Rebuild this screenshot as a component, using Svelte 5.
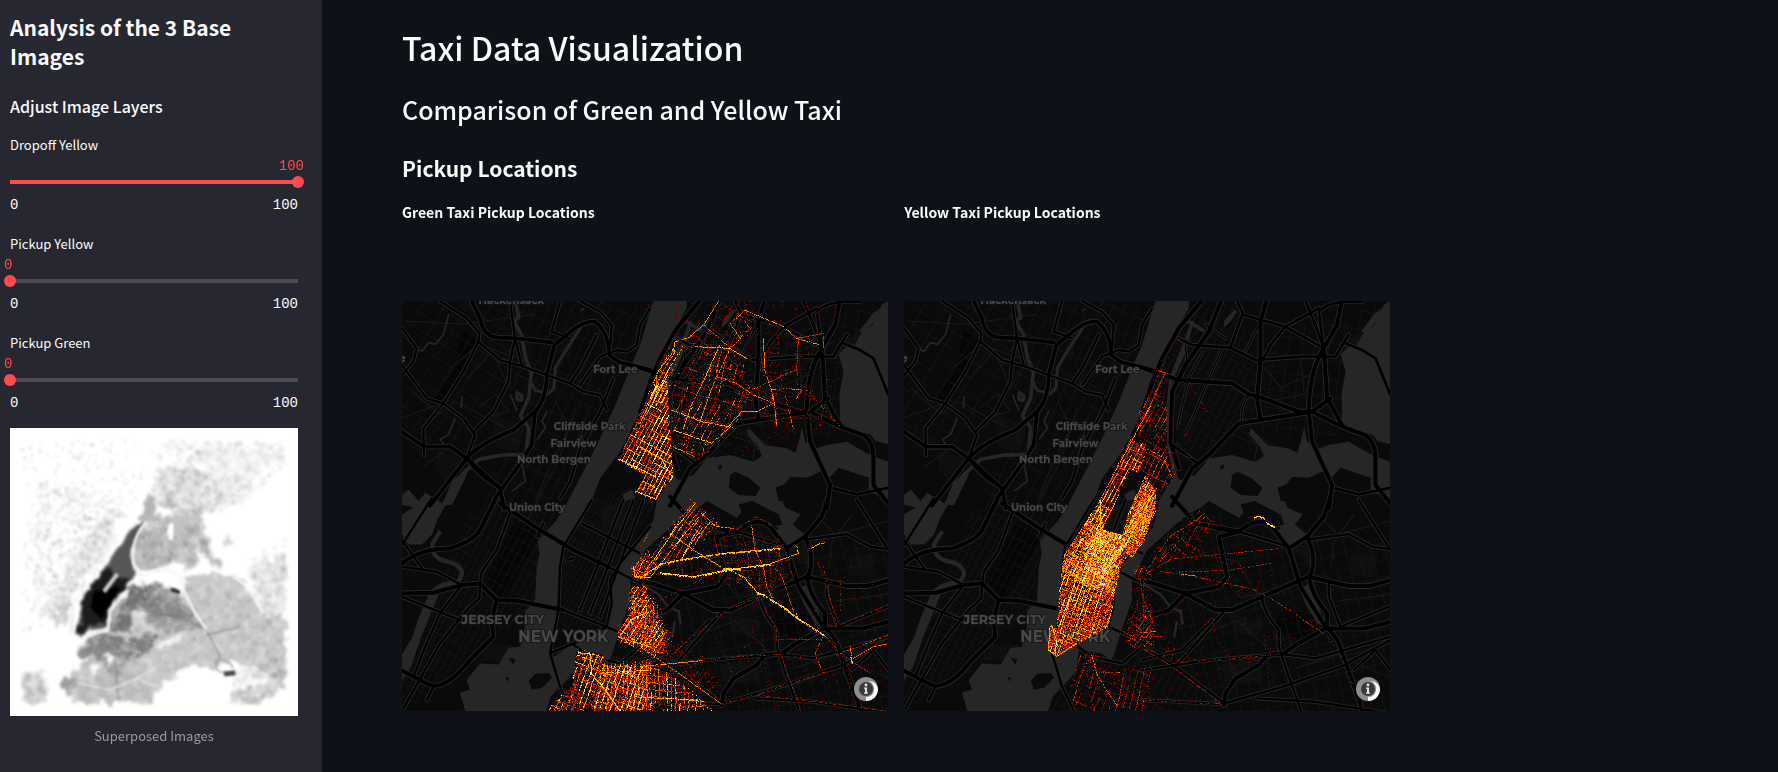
<script>
  let layers = $state([
    { id: 'dropoff-yellow', name: 'Dropoff Yellow', value: 100 },
    { id: 'pickup-yellow', name: 'Pickup Yellow', value: 0 },
    { id: 'pickup-green', name: 'Pickup Green', value: 0 }
  ]);

  // ---- seeded noise -------------------------------------------------------
  function seeded(seed) {
    let s = seed;
    return () => {
      s = (s + 0x6d2b79f5) | 0;
      let t = Math.imul(s ^ (s >>> 15), 1 | s);
      t = (t + Math.imul(t ^ (t >>> 7), 61 | t)) ^ t;
      return ((t ^ (t >>> 14)) >>> 0) / 4294967296;
    };
  }
  const hash = (a, b) => {
    const v = Math.sin(a * 127.1 + b * 311.7) * 43758.5453;
    return v - Math.floor(v);
  };
  function inside(x, y, p) {
    let r = false;
    for (let i = 0, j = p.length - 1; i < p.length; j = i++) {
      if (p[i][1] > y !== p[j][1] > y && x < ((p[j][0] - p[i][0]) * (y - p[i][1])) / (p[j][1] - p[i][1]) + p[i][0]) r = !r;
    }
    return r;
  }

  // ---- heat raster --------------------------------------------------------
  const W = 486, H = 410;
  const RAMP = ['#3c0500', '#7a0d00', '#b81a00', '#e83c00', '#ff7a00', '#ffa800', '#ffd21c', '#fff09a'];
  // map sheets: nw, ne, sw, se (origin of each sheet in thirds of a pixel)
  const SHEETS = { a: [-6, -18], b: [714, -18], c: [-6, 597], d: [714, 597] };
  const parse = (sheet, s) => {
    const o = SHEETS[sheet];
    return s.split(' ').map((q) => {
      const [x, y] = q.split(',').map(Number);
      return [(x + o[0]) / 3, (y + o[1]) / 3];
    });
  };

  function raster(seed, areas, lines, holes) {
    const rnd = seeded(seed);
    const cells = new Float32Array(W * H);
    const put = (x, y, v) => {
      x = Math.floor(x);
      y = Math.floor(y);
      if (x >= 0 && y >= 0 && x < W && y < H && v > cells[y * W + x]) cells[y * W + x] = v;
    };
    for (const [sheet, pts, deg, su, sv, power, fill, loose = 0] of areas) {
      const p = parse(sheet, pts);
      const a = (deg * Math.PI) / 180;
      const c = Math.cos(a), s = Math.sin(a);
      const xs = p.map((q) => q[0]), ys = p.map((q) => q[1]);
      const pad = loose * 4;
      for (let y = Math.floor(Math.min(...ys)) - pad; y <= Math.max(...ys) + pad; y++)
        for (let x = Math.floor(Math.min(...xs)) - pad; x <= Math.max(...xs) + pad; x++) {
          const jitter = 1 + loose * 7;
          if (!inside(x + (rnd() - 0.5) * jitter, y + (rnd() - 0.5) * jitter, p)) continue;
          const u0 = x * c + y * s + 900, v0 = -x * s + y * c + 900;
          const u = u0 + loose * (2.2 * Math.sin(v0 / 13) + 1.5 * Math.sin(v0 / 31 + u0 / 19));
          const v = v0 + loose * (2.4 * Math.sin(u0 / 15) + 1.5 * Math.sin(u0 / 37 + v0 / 23));
          const iu = Math.floor(u / su), iv = Math.floor(v / sv);
          let e = 0;
          const gu = hash(iu, Math.floor(v / 18 + iu * 0.37));
          const gv = hash(iv + 57, Math.floor(u / 16 + iv * 0.41));
          const cut = loose * 0.42;
          if (u - iu * su < 1.1 && gu > cut) e = power * (0.3 + 0.85 * gu);
          if (v - iv * sv < 1.05 && gv > cut) e = Math.max(e, power * (0.2 + 0.7 * gv));
          if (e) e = rnd() < loose * 0.38 ? 0 : e * (0.35 + rnd() * 0.8);
          if (!e) e = rnd() < fill ? Math.max(0.2, fill) * (0.3 + rnd()) : 0;
          if (e > 0.1) put(x, y, Math.min(1, e));
        }
    }
    for (const [sheet, power, density, pts] of lines) {
      const p = parse(sheet, pts);
      for (let i = 1; i < p.length; i++) {
        const dx = p[i][0] - p[i - 1][0], dy = p[i][1] - p[i - 1][1];
        const n = Math.max(1, Math.ceil(Math.max(Math.abs(dx), Math.abs(dy))));
        for (let k = 0; k <= n; k++) {
          if (rnd() > density) continue;
          const x = p[i - 1][0] + (dx * k) / n, y = p[i - 1][1] + (dy * k) / n;
          put(x, y, power * (0.5 + rnd() * 0.5));
          if (power > 0.95 && rnd() < 0.5) put(x, y + 1, power * 0.7);
          if (power > 0.5 && rnd() < 0.12) put(x + (rnd() - 0.5) * 5, y + (rnd() - 0.5) * 5, 0.35);
        }
      }
    }
    for (const [sheet, pts] of holes) {
      const p = parse(sheet, pts);
      for (let y = 0; y < H; y++) for (let x = 0; x < W; x++) if (inside(x, y, p)) cells[y * W + x] = 0;
    }
    const d = RAMP.map(() => '');
    for (let y = 0; y < H; y++)
      for (let x = 0; x < W; x++) {
        const e = cells[y * W + x];
        if (e > 0.06) d[Math.min(7, Math.floor(e * 8))] += `M${x} ${y}h1v1h-1z`;
      }
    return d;
  }

  const green = raster(
    11,
    [
      // upper Manhattan
      ['a', '654,492 745,300 800,230 805,330 812,440 818,545 765,615 705,588 735,540', 28, 4, 7, 1.16, 0.3],
      ['a', '745,300 790,190 825,140 850,150 810,235 800,330', 28, 4, 8, 0.85, 0.15, 0.4],
      // Bronx
      ['b', '105,250 180,165 235,150 310,180 315,250 350,285 270,395 180,490 105,450 95,330', 21, 6, 11, 0.58, 0.1, 1],
      ['b', '100,150 190,90 225,18 330,18 335,110 270,170 120,160', 30, 9, 14, 0.28, 0.05, 1],
      ['b', '360,140 480,130 485,280 560,330 570,390 430,430 350,350', 4, 16, 21, 0.28, 0.03, 1],
      // Astoria
      ['d', '155,0 235,70 180,120 130,178 60,195 0,235 15,200 90,90', 35, 5, 9, 0.76, 0.2, 0.6],
      // Jackson Heights
      ['d', '20,220 170,160 250,100 420,110 470,200 400,290 350,260 60,220', -9, 10, 8, 0.3, 0.06, 1],
      // Greenpoint and Williamsburg
      ['c', '700,190 750,150 750,235 695,235', 24, 4, 6, 0.85, 0.35, 0.4],
      ['c', '690,262 735,255 770,340 800,400 790,440 775,460 655,425 655,395 690,340', 34, 4, 6, 0.95, 0.36, 0.3],
      ['d', '-20,280 50,310 75,390 95,400 80,460 50,475 -40,430', 2, 4, 6, 0.74, 0.26, 0.8],
      // Brooklyn
      ['c', '535,452 605,462 625,500 750,490 750,632 440,632 515,560', 22, 5, 7, 1.0, 0.32, 0.3],
      ['d', '-110,490 30,480 110,540 200,612 210,632 -150,632', 3, 4, 7, 0.8, 0.26, 0.5],
      ['d', '60,470 130,420 190,480 240,560 240,610 120,540', 40, 7, 11, 0.3, 0.1, 1],
      ['d', '350,60 745,200 745,632 240,632', -14, 40, 40, 0.14, 0.006, 1],
      ['b', '20,18 600,18 600,400 300,500 100,500', -14, 40, 40, 0.14, 0.012, 1]
    ],
    [
      ['b', 0.75, 0.9, '235,18 190,90 150,125 105,140 100,170 50,235 50,280 0,385'],
      ['b', 0.85, 0.9, '165,155 270,160 320,190'],
      ['b', 0.7, 0.8, '190,90 225,120 270,160 300,130 270,85 315,45 430,95 470,130 540,150'],
      ['b', 0.6, 0.7, '300,60 330,100 300,130'],
      ['b', 0.6, 0.75, '230,245 290,265 340,300 400,325 395,285 440,280 485,285 470,310'],
      ['b', 0.7, 0.75, '370,130 375,230 400,300 410,390'],
      ['b', 0.5, 0.7, '350,280 420,245 470,225 475,130'],
      ['b', 0.8, 0.85, '95,345 185,380 265,395 305,350 350,350 400,325'],
      ['b', 0.9, 0.9, '100,405 215,445 270,395'],
      ['b', 0.7, 0.8, '100,455 175,490'],
      ['b', 0.6, 0.7, '435,300 460,400'],
      ['b', 0.5, 0.6, '500,285 600,395'],
      ['b', 0.5, 0.7, '470,130 550,115 550,160'],
      ['b', 0.85, 0.85, '240,150 190,260 150,340 130,400'],
      ['b', 0.75, 0.8, '270,160 215,280 180,380 130,450'],
      ['b', 1, 1, '0,455 65,490 95,545'],
      ['b', 1, 1, '42,268 56,284 48,290'],
      ['a', 1, 1, '654,492 735,530 765,545'],
      ['a', 1, 1, '705,588 765,612'],
      ['d', 0.96, 0.95, '0,232 60,192 130,178 250,160 420,145'],
      ['d', 1.1, 1, '60,218 160,230 270,208 390,192'],
      ['d', 0.8, 0.9, '390,192 475,160 470,138'],
      ['d', 0.96, 0.9, '270,208 310,230 350,275 365,282 400,302 470,350'],
      ['d', 1, 1, '352,280 372,284'],
      ['d', 1, 1, '250,206 300,208'],
      ['d', 1, 0.95, '395,300 430,320 470,352 510,378 555,408'],
      ['d', 0.7, 0.8, '470,340 474,362'],
      ['d', 0.65, 0.8, '335,75 345,150 370,200 380,260 400,300'],
      ['d', 0.5, 0.8, '395,190 425,230 460,330'],
      ['d', 0.85, 0.9, '515,145 535,132 555,128'],
      ['d', 0.9, 0.9, '15,215 90,110 165,10'],
      ['d', 0.85, 0.85, '35,225 110,130 185,40'],
      ['d', 0.85, 0.85, '125,178 160,120 190,80'],
      ['d', 0.85, 0.9, '90,100 160,150 240,200'],
      ['d', 0.7, 0.8, '185,40 230,80 280,85'],
      ['d', 0.4, 0.6, '280,95 350,50 390,75'],
      ['d', 0.7, 0.8, '0,440 60,480 130,530 240,610'],
      ['d', 0.75, 0.9, '0,500 80,492 185,482'],
      ['d', 0.35, 0.5, '185,482 300,470 425,462'],
      ['d', 0.35, 0.5, '425,462 440,520 475,600 480,630'],
      ['d', 0.35, 0.5, '360,290 410,390 410,420 540,418'],
      ['d', 0.4, 0.6, '555,408 600,460 690,520'],
      ['d', 0.55, 0.6, '550,410 525,460 545,510'],
      ['d', 0.5, 0.6, '590,465 680,430 745,405'],
      ['d', 0.65, 0.75, '635,490 632,440'],
      ['d', 0.65, 0.75, '640,475 668,460 700,440 740,432'],
      ['d', 1, 1, '632,472 638,487'],
      ['d', 0.3, 0.4, '590,380 745,315'],
      ['d', 0.3, 0.4, '600,250 600,340'],
      ['d', 0.35, 0.5, '245,612 360,580 560,515'],
      ['d', 0.35, 0.45, '350,585 520,605 740,632'],
      ['d', 0.35, 0.5, '550,200 590,380'],
      ['d', 0.35, 0.4, '60,300 220,220'],
      ['d', 0.35, 0.5, '130,430 260,330 360,290'],
      ['d', 0.9, 0.9, '0,592 130,598 190,605'],
      ['c', 1, 1, '535,458 570,462 575,520 620,575 660,632'],
      ['c', 0.9, 0.9, '600,520 750,510'],
      ['c', 0.95, 1, '655,410 700,425 750,440'],
      ['c', 1, 1, '660,405 690,360 745,335'],
      ['c', 0.9, 1, '700,200 705,230 750,232'],
      ['c', 0.6, 0.7, '720,140 750,95']
    ],
    []
  );

  SHEETS.a = [-12, -18];
  SHEETS.b = [708, -18];
  SHEETS.c = [-12, 597];
  SHEETS.d = [708, 597];
  const yellow = raster(
    29,
    [
      // Harlem
      ['a', '690,420 745,310 775,260 800,350 805,460 825,545 765,600 700,520', 28, 5, 9, 0.46, 0.06, 0.4],
      ['b', '60,200 80,190 70,290 0,420 -30,400 20,300', 28, 5, 12, 0.32, 0.03, 0.7],
      // west side
      ['a', '590,632 690,430 740,450 650,680 600,720 540,700', 28, 4, 7, 0.88, 0.28],
      // east side
      ['a', '660,700 735,540 765,585 765,632 730,740 690,790', 28, 3, 6, 0.96, 0.62],
      // midtown
      ['c', '600,0 610,85 668,105 735,-40 768,30 715,120 660,200 640,290 560,260 485,210 490,165 545,80', 28, 4, 6, 0.98, 0.6],
      ['c', '555,120 600,85 665,105 680,130 640,195 600,240 555,200', 28, 3, 5, 1.0, 0.8],
      // downtown
      ['c', '487,180 640,200 640,300 625,380 525,435 470,470 443,450 450,375 470,385 475,300', 20, 4, 6, 0.95, 0.5],
      // Queens and Brooklyn
      ['d', '10,215 90,90 185,30 235,70 150,170 50,190', 35, 8, 11, 0.32, 0.03, 0.8],
      ['c', '700,200 750,195 750,235 705,235', 24, 4, 6, 0.4, 0.1, 0.6],
      ['c', '670,400 700,340 760,330 760,440 700,440', 34, 4, 6, 0.44, 0.12, 0.6],
      ['c', '700,240 750,240 750,330 700,330', 5, 6, 8, 0.28, 0.06, 0.8],
      ['c', '535,470 580,460 620,510 750,500 750,632 520,632 520,540', 20, 6, 9, 0.36, 0.05, 0.8],
      ['d', '-10,300 40,320 60,400 120,470 80,490 -10,440', 6, 7, 10, 0.24, 0.03, 1],
      ['d', '20,100 300,100 560,420 250,620 0,620', 6, 40, 50, 0.12, 0.008, 1]
    ],
    [
      ['c', 1, 1, '600,0 600,85 665,105'],
      ['c', 0.9, 0.9, '600,85 560,160 520,260 480,400'],
      ['c', 0.9, 1, '450,380 445,450 470,470 520,435'],
      ['c', 1, 0.9, '455,375 470,420 465,460'],
      ['a', 0.8, 0.85, '595,625 750,335'],
      ['b', 0.5, 0.7, '50,225 75,235 50,285 25,350 0,395'],
      ['b', 0.75, 0.9, '0,590 40,608'],
      ['b', 0.7, 0.8, '0,450 70,488 95,545'],
      ['d', 1, 1, '342,53 355,48 372,54'],
      ['d', 1, 1, '380,68 392,75 402,80'],
      ['d', 0.9, 1, '382,72 398,80'],
      ['d', 0.7, 0.9, '120,222 165,228'],
      ['d', 0.4, 0.7, '60,215 120,222'],
      ['d', 0.4, 0.6, '165,230 340,268 400,300 480,352 550,400'],
      ['d', 0.4, 0.55, '0,232 90,178 250,162 425,145'],
      ['d', 0.38, 0.5, '110,215 260,212 390,190'],
      ['d', 0.5, 0.7, '20,210 90,110 170,60 195,38'],
      ['d', 0.45, 0.6, '95,100 180,155'],
      ['d', 0.4, 0.6, '60,185 150,90'],
      ['d', 0.7, 0.7, '0,398 45,395'],
      ['d', 0.5, 0.6, '0,412 65,408'],
      ['d', 0.4, 0.6, '0,235 10,300 40,370'],
      ['d', 0.3, 0.5, '0,440 90,495 240,612'],
      ['d', 0.3, 0.4, '0,600 240,612'],
      ['d', 0.3, 0.4, '100,490 425,462'],
      ['d', 0.25, 0.3, '555,400 600,460 670,630'],
      ['b', 0.28, 0.25, '110,140 190,85 215,70'],
      ['b', 0.28, 0.2, '110,450 200,350 140,250'],
      ['b', 0.3, 0.35, '90,470 160,490 110,440'],
      ['c', 0.6, 0.8, '575,465 590,520 620,570 650,615'],
      ['c', 0.55, 0.6, '570,470 545,520 520,600'],
      ['c', 0.55, 0.7, '605,518 660,518']
    ],
    [
      ['c', '608,88 690,-95 716,-80 665,103']
    ]
  );

  // ---- superposed image speckle ------------------------------------------
  const dust = (() => {
    const rnd = seeded(5);
    const zones = [
      [[[66, 60], [470, 60], [400, 260], [240, 480], [170, 620], [66, 660]], 460, 0.07, 4],
      [[[110, 180], [400, 240], [330, 370], [160, 600], [100, 560]], 760, 0.07, 5],
      [[[230, 380], [340, 270], [340, 390], [190, 600], [110, 600]], 340, 0.06, 6],
      [[[490, 60], [850, 70], [850, 140], [700, 280], [560, 260], [450, 210]], 620, 0.05, 8],
      [[[560, 140], [660, 170], [670, 280], [520, 270], [450, 230], [470, 160]], 260, 0.05, 8],
      [[[740, 420], [858, 350], [858, 560], [780, 560]], 150, 0.06, 8],
      [[[66, 760], [140, 750], [140, 850], [66, 850]], 90, 0.06, 9],
      [[[700, 760], [858, 700], [858, 800], [780, 850], [690, 850]], 160, 0.07, 8],
      [[[400, 340], [600, 300], [660, 430], [560, 430], [420, 440]], 220, 0.06, 8],
      [[[340, 500], [560, 490], [850, 540], [850, 700], [460, 760], [230, 840], [250, 690]], 700, 0.05, 8]
    ];
    const out = [];
    for (const [poly, n, op, size] of zones) {
      const xs = poly.map((q) => q[0]), ys = poly.map((q) => q[1]);
      const x0 = Math.min(...xs), x1 = Math.max(...xs), y0 = Math.min(...ys), y1 = Math.max(...ys);
      for (let i = 0; i < n; i++) {
        const x = x0 + rnd() * (x1 - x0), y = y0 + rnd() * (y1 - y0);
        if (inside(x, y, poly)) out.push({ x: Math.round(x), y: Math.round(y), r: 3 + Math.round(rnd() * size), o: (op * (0.4 + rnd() * 0.8)).toFixed(2) });
      }
    }
    return out;
  })();

  // ---- base map -----------------------------------------------------------
  const roads = [
    ['translate(-6 -18)', 11, [
      'M215 18L240 70Q250 128 300 128L345 130L455 142',
      'M90 632L200 490Q240 445 340 405L405 350Q440 310 440 240L463 150L500 120Q550 75 585 80Q625 110 628 180L655 200L750 225',
      'M6 410L72 455L150 455L200 490L300 580L312 640',
      'M405 350L395 450L350 520L285 610'
    ]],
    ['translate(-6 -18)', 7, [
      'M120 18L200 70L238 115L235 140L300 195L370 215L440 240L510 265L550 290L600 300L620 345',
      'M235 140L190 230L130 325L70 400L72 480',
      'M6 210L80 310L130 325L190 370L225 420L200 490',
      'M330 18L345 130L330 200L325 260L280 350L220 410',
      'M540 18L600 50L635 90L628 180',
      'M750 40L720 90L710 150L680 170L650 165L600 185L540 270',
      'M480 18L455 110L510 130M345 130L365 210',
      'M200 490Q230 540 300 580M6 100L50 160L40 200L6 240',
      'M640 250L600 350L540 460L510 560L480 610M510 265L540 220L590 120'
    ]],
    ['translate(714 -18)', 12, [
      'M185 10L110 100L60 190L35 250L0 350',
      'M240 10L200 110L130 210L90 290L85 440L110 520',
      'M0 218L110 255L270 265L320 298L350 305L470 350L510 350L600 395L670 420Q700 440 700 490L700 570L745 625',
      'M375 10L355 80L355 200L345 310L355 372',
      'M90 632L150 520L200 480L290 385L510 350L565 310',
      'M600 10L585 90L545 160Q500 230 500 350L510 440L570 570L560 640',
      'M545 160L555 310L600 390'
    ]],
    ['translate(714 -18)', 8, [
      'M285 18L305 60L430 95L545 160',
      'M110 130L150 150L265 158L340 195L480 185L580 185L620 118',
      'M610 145L660 165L700 190L745 300',
      'M490 18L520 90L545 160L530 50Q560 15 660 20',
      'M580 580L650 598L745 578M85 445L160 500',
      'M300 60L265 158M350 200Q370 190 385 150L430 95L530 40'
    ]],
    ['translate(714 -18)', 4, [
      'M190 155L140 250L105 400M240 160L180 300L130 420M355 80L310 170M320 300Q290 340 300 390',
      'M130 150L135 210M190 90L250 130'
    ]],
    ['translate(-6 597)', 12, [
      'M6 190Q60 145 150 145Q230 120 245 80L285 0',
      'M6 280L100 278L185 255L240 250L290 300L350 302L490 330',
      'M300 10L420 90L520 150L625 200',
      'M290 300L275 360L280 410L210 480Q130 580 80 550L6 512'
    ]],
    ['translate(-6 597)', 7, [
      'M6 200L110 215L185 255L120 340L80 430L40 530',
      'M330 40L290 150L245 215L240 250L238 295L200 330L120 430L10 625',
      'M575 0L490 140L480 200L475 330L450 460L520 430L620 380L635 310L630 240L660 190L750 80',
      'M450 460L480 560L520 640',
      'M6 135L95 -5M6 120L70 210',
      'M490 330L620 380L750 440M625 200L720 250M515 430L570 470L660 490L720 440',
      'M6 290L180 360M100 560L80 600M430 70L412 110',
      'M670 0L540 330M700 0L570 340M730 0L600 350M545 70L720 160M500 180L520 175'
    ]],
    ['translate(714 597)', 12, [
      'M90 -10L160 70L290 95Q350 45 390 80L440 145L475 260L550 380Q590 410 600 460L665 640',
      'M440 145L495 110L545 50L565 -10',
      'M0 240L130 280L220 330L270 330L360 290L500 230L620 258L680 258L745 240',
      'M495 110Q530 190 500 230Q510 290 555 340L555 385L670 385L745 365',
      'M130 280L230 260L255 230L230 110L290 95L225 85',
      'M0 380L30 345L80 330L130 280',
      'M245 615L250 580L280 535L350 495L375 465L425 460L460 435L550 385'
    ]],
    ['translate(714 597)', 7, [
      'M0 510L200 480L420 462L520 475L745 410',
      'M360 290Q360 330 410 390L410 440L440 530L480 640',
      'M0 600L240 612L420 560L600 498L745 420',
      'M0 440L100 500L250 612M100 500L250 330',
      'M650 0L700 80L745 150',
      'M500 118L620 102L690 140L745 147',
      'M290 95L440 140M0 480L120 450L210 360M345 595L520 605L745 640',
      'M560 240L560 290L595 380L745 318M635 510L700 450L745 510'
    ]]
  ];

  const streets = [
    ['sa', '0,0 330,0 420,230 220,400 60,470 0,400'],
    ['sb', '340,0 740,0 560,480 480,590 200,640 330,400'],
    ['sc', '200,640 470,600 400,960 260,1000 60,1200 0,1230 0,1090 90,900'],
    ['sd', '780,170 870,10 1000,0 1080,300 1000,370 900,460 830,430 800,300'],
    ['se', '1080,120 1440,0 1300,400 1200,430 1030,380'],
    ['sf', '480,760 560,600 810,520 640,800 600,970 480,1000'],
    ['sg', '880,610 1100,700 1458,720 1458,1230 960,1230 700,1000 730,800'],
    ['sd', '520,1060 760,1060 960,1230 440,1230']
  ];

  const waters = [
    // Hudson and Upper Bay
    'M754 0L714 132L684 202L644 302L594 412L554 492L494 607L464 657L424 700L407 720L413 760L404 797L399 897L370 930L369 977L354 1037L320 1040L290 1090L234 1087L194 1137L204 1165L174 1175L190 1230L432 1230L446 1187L500 1130L516 1110L524 1047L594 1057L620 1080L630 1060L649 997L684 897L684 837L729 747L774 707L844 637L866 590L830 545L818 520L800 450L796 320L806 240L846 150L870 60L862 60L836 130L796 230L786 320L790 442L810 527L764 597L754 657L714 717L644 807L630 857L628 897L608 977L510 1030L455 1068L439 1057L464 927L469 797L484 737L534 657L569 597L594 532L654 452L714 332L749 232L774 172L814 92L854 22L854 0Z',
    // East River, Flushing Bay
    'M774 600L814 542L874 522L914 472L984 462L1054 482L1079 465L1070 440L1035 400L1040 380L1089 432L1154 442L1180 455L1190 420L1200 380L1209 422L1244 442L1274 432L1334 422L1404 462L1458 482L1458 590L1300 545L1260 510L1214 530L1164 527L1130 572L1150 620L1196 640L1172 670L1208 700L1154 740L1112 700L1130 680L1020 640L1062 606L1050 600L1004 650L950 620L914 600L890 620L850 640L780 700L740 720Z',
    // Long Island Sound
    'M1458 0L1440 10L1412 70L1374 102L1354 140L1340 130L1310 160L1324 212L1312 282L1314 362L1354 392L1404 400L1420 420L1458 430Z',
    'M1434 20L1418 60L1380 100L1372 90L1410 40Z',
    // Newark Bay
    'M54 607L100 597L112 640L90 700L60 730L20 730L0 700L0 640ZM0 1060L30 1010L50 950L80 880L100 860L110 880L60 1000L30 1090L0 1140Z',
    'M0 580L20 565L50 600L70 575L130 612L110 650L40 620L0 612Z',
    'M120 612L150 540L200 500L190 530L150 612Z',
    'M960 60L990 26L1000 30L980 60L960 80Z',
    'M660 580L690 565L700 590L670 600Z',
    'M1190 860L1212 850L1240 900L1260 970L1240 970L1200 900Z'
  ];
  const land = [
    'M984 520L1000 512L1040 530L1075 560L1060 585L1010 582L980 560Z',
    'M948 495L960 490L958 504L950 506ZM380 1140L400 1118L440 1116L450 1130L420 1160L390 1166Z',
    'M1120 560L1180 535L1220 530L1230 600L1130 600ZM1010 610L1050 600L1130 640L1140 670L1100 680L1020 640Z',
    'M320 1070L340 1075L334 1092ZM310 1128L322 1130L318 1142Z',
    'M1282 530L1310 500L1370 520L1400 530L1400 590L1300 580Z'
  ];
</script>

{#snippet taxiMap(kind, heat, label)}
  <div class="map">
    <svg viewBox="0 0 1458 1230" role="img" aria-label={label}>
      <defs>
        {#each [['sa', 32, 58, 44], ['sb', 24, 34, 60], ['sc', 28, 20, 36], ['sd', 28, 22, 34], ['se', 8, 40, 54], ['sf', 29, 14, 34], ['sg', -14, 38, 50]] as [id, angle, w, h]}
          <pattern id={kind + id} width={w} height={h} patternUnits="userSpaceOnUse" patternTransform="rotate({angle})">
            <path d="M0 0H{w}M0 0V{h}" stroke="#181818" stroke-width="3" fill="none" />
          </pattern>
        {/each}
        <pattern id={kind + 'dots'} width="8" height="8" patternUnits="userSpaceOnUse">
          <path d="M0 0h3v3h-3zM4 4h3v3h-3z" fill="#171717" />
        </pattern>
      </defs>
      <rect width="1458" height="1230" fill="#0a0a0a" />
      <g fill="#050505">
        <path d="M180 90L230 120L130 320L90 300L150 220ZM340 660L420 690L300 900L250 840ZM1130 930L1230 940L1200 1020L1100 980Z" />
      </g>
      {#each streets as [id, pts]}
        <polygon points={pts} fill="url(#{kind}{id})" />
      {/each}
      <g fill="url(#{kind}dots)">
        <path d="M270 340L370 370L350 450L280 440ZM110 450L190 480L130 540L100 500ZM480 140L520 100L500 190ZM1000 380L1100 420L1080 460ZM1300 130L1380 90L1330 180ZM600 620L680 600L660 690L600 680ZM240 1030L340 1030L300 1080L240 1080ZM1160 740L1220 730L1220 800ZM1340 760L1420 760L1410 830L1340 820ZM980 940L1080 960L1060 1010L990 990ZM950 1090L1080 1070L1070 1150L960 1140Z" />
      </g>
      <g fill="none" stroke="#1b1b1b" stroke-width="3">
        <path d="M10 60L180 70L400 40M20 260L110 340L160 300L310 380M150 200L230 130L400 190M200 230L270 150L320 260M230 320L280 280L320 330L250 350M0 350L140 300M60 500L140 440M460 300L500 380L440 500L400 600M520 320L470 480L380 650M550 350L500 560M1080 200L1130 260L1220 220M1100 300L1200 280L1190 160M980 400L1060 430L1050 480M1240 640L1300 700L1458 660M1280 800L1290 720L1350 640M1300 900L1458 880M960 830L1010 890L1100 870M880 760L1000 780L1040 850M860 1010L1000 960L1100 1050M1180 1100L1300 1060L1458 1130" />
      </g>
      <g fill="#262626">
        {#each waters as d}<path {d} />{/each}
      </g>
      <g fill="none" stroke="#262626" stroke-linejoin="round">
        <path d="M340 0L350 50L335 60L358 100L370 170L388 215L380 290L355 345L380 380L372 460L300 462L230 475L180 520L120 620" stroke-width="11" />
        <path d="M372 460L360 490L370 540L330 570" stroke-width="5" />
        <path d="M384 240L400 268L440 278L456 260L460 200L490 150L530 90L545 60" stroke-width="9" />
        <path d="M545 22L535 30M140 40L125 100L100 130L80 125L60 150L40 145M160 350L140 400L115 415L125 430M180 285L178 320M325 280L345 330M435 330L420 360L430 380L405 415M540 400L530 440" stroke-width="5" />
        <path d="M115 690L90 730Q90 770 130 780Q180 790 180 820L170 840L130 850Q90 860 80 900" stroke-width="13" />
        <path d="M720 850L770 880L800 920L830 930L836 970M810 1010L818 960" stroke-width="7" />
        <path d="M345 275L360 285L358 298L345 295ZM850 60L900 90" stroke-width="10" />
        <path d="M940 1010L1000 1130M1080 1000L1100 1200" stroke-width="3" stroke-dasharray="6 8" />
      </g>
      <g fill="#0a0a0a">
        {#each land as d}<path {d} />{/each}
      </g>
      <g fill="none" stroke-linejoin="round" stroke-linecap="round">
        {#each roads as [move, w, list]}
          <g transform={move} stroke="#292929" stroke-width={w + 5}>
            {#each list as d}<path {d} />{/each}
          </g>
        {/each}
        {#each roads as [move, w, list]}
          <g transform={move} stroke="#010101" stroke-width={w}>
            {#each list as d}<path {d} />{/each}
          </g>
        {/each}
      </g>
      <g class="place">
        <text x="328" y="8" font-size="31" text-anchor="middle">Hackensack</text>
        <text x="1" y="184" font-size="31" text-anchor="middle">e</text>
        <text x="640" y="217" font-size="31" text-anchor="middle">Fort Lee</text>
        <text x="563" y="388" font-size="31" text-anchor="middle">Cliffside Park</text>
        <text x="514" y="437" font-size="31" text-anchor="middle">Fairview</text>
        <text x="456" y="487" font-size="31" text-anchor="middle">North Bergen</text>
        <text x="405" y="630" font-size="31" text-anchor="middle">Union City</text>
        <text x="302" y="968" font-size="38" text-anchor="middle">JERSEY CITY</text>
        <text x="484" y="1022" font-size="46" text-anchor="middle">NEW YORK</text>
      </g>
      <g transform="scale(3)" shape-rendering="crispEdges">
        {#each heat as d, i}<path {d} fill={RAMP[i]} />{/each}
      </g>
    </svg>
    <button class="info" type="button" aria-label="Toggle attribution">
      <svg viewBox="0 0 24 24" aria-hidden="true">
        <circle cx="12" cy="12" r="12" fill="#8d8d8d" />
        <path d="M14 4C20 4 24 8 24 13C23 20 18 24 12 24L12 20C17 20 20 17 20 12C20 8 18 5 14 4Z" fill="#fff" />
        <circle cx="12" cy="12" r="7" fill="#3a3a3a" />
        <circle cx="12" cy="8" r="1.4" fill="#e6e6e6" />
        <path d="M10 10.5h3v5h1v1.3h-4v-1.3h1v-3.7h-1z" fill="#e6e6e6" />
      </svg>
    </button>
  </div>
{/snippet}

<div class="app">
  <aside>
    <h1>Analysis of the 3 Base Images</h1>
    <h2>Adjust Image Layers</h2>
    <div class="sliders">
      {#each layers as layer}
        <div class="slider">
          <label for={layer.id}>{layer.name}</label>
          <div class="value">
            <output for={layer.id} style="left: {layer.value}%; transform: translateX(-{layer.value}%)">{layer.value}</output>
          </div>
          <input
            id={layer.id}
            type="range"
            min="0"
            max="100"
            bind:value={layer.value}
            style="--fill: {layer.value}%"
          />
          <div class="ticks"><span>0</span><span>100</span></div>
        </div>
      {/each}
    </div>
    <figure>
      <svg viewBox="30 24 864 864" role="img" aria-label="Superposed Images">
        <defs>
          <filter id="rough" x="-5%" y="-5%" width="110%" height="110%">
            <feTurbulence type="fractalNoise" baseFrequency="0.035" numOctaves="4" seed="4" result="n" />
            <feDisplacementMap in="SourceGraphic" in2="n" scale="46" xChannelSelector="R" yChannelSelector="G" />
            <feGaussianBlur stdDeviation="4" />
          </filter>
          <filter id="rough-core" x="-10%" y="-10%" width="120%" height="120%">
            <feTurbulence type="fractalNoise" baseFrequency="0.05" numOctaves="3" seed="4" result="n" />
            <feDisplacementMap in="SourceGraphic" in2="n" scale="22" xChannelSelector="R" yChannelSelector="G" />
            <feGaussianBlur stdDeviation="4" />
          </filter>
          <filter id="soft"><feGaussianBlur stdDeviation="3" /></filter>
          <filter id="grain" x="0" y="0" width="100%" height="100%">
            <feTurbulence type="fractalNoise" baseFrequency="0.03" numOctaves="4" seed="9" />
            <feColorMatrix values="0 0 0 0 1  0 0 0 0 1  0 0 0 0 1  3 0 0 0 -1.35" />
            <feComposite in2="SourceGraphic" operator="in" />
          </filter>
        </defs>
        <rect x="30" y="24" width="864" height="864" fill="#fff" />
        <g filter="url(#rough)">
          <polygon points="270,340 335,260 345,370 250,480 190,560 110,610 150,530" fill="#f1f1f1" />
          <polygon points="460,190 500,150 570,140 650,170 650,280 540,265 450,230" fill="#efefef" />
          <polygon points="560,80 700,80 800,110 720,250 640,280 620,160" fill="#f8f8f8" />
          <polygon points="445,225 475,235 470,290 430,305 420,290" fill="#b4b4b4" />
          <polygon points="450,285 520,290 500,330 505,440 410,450 395,400 410,345" fill="#b9b9b9" />
          <polygon points="520,270 600,260 620,330 590,360 585,430 560,445 500,400 515,320" fill="#c2c2c2" />
          <polygon points="590,350 620,350 630,395 670,430 650,440 600,400" fill="#c6c6c6" />
          <polygon points="675,340 690,350 690,375 678,370" fill="#c8c8c8" />
          <polygon points="480,240 535,250 520,270 480,262" fill="#bdbdbd" />
          <polygon points="740,430 800,430 858,400 858,600 790,580" fill="#ededed" />
          <polygon points="550,475 640,460 720,470 760,540 800,580 858,600 858,740 850,790 760,745 700,720 640,745 560,740 500,790 440,850 230,850 210,800 215,760 280,710 230,700 240,680 290,640 340,640 330,600 340,550 420,490 510,500 560,540" fill="#c8c8c8" />
          <polygon points="300,770 400,760 450,800 450,850 240,850 230,800" fill="#bcbcbc" />
          <polygon points="345,545 430,485 520,505 560,545 610,620 540,640 420,610 350,600 335,620 330,600" fill="#a2a2a2" />
          <polygon points="395,520 470,530 550,560 590,600 520,600 400,570" fill="#8a8a8a" />
          <polygon points="385,510 430,485 475,510 410,550 360,575" fill="#767676" />
          <polygon points="330,610 360,580 395,600 390,635 330,635" fill="#747474" />
          <polygon points="230,700 290,640 380,655 470,640 450,700 380,720 300,715 240,710" fill="#858585" />
          <polygon points="300,710 380,700 360,780 300,750" fill="#a8a8a8" />
          <polygon points="190,770 220,770 228,800 210,835 185,815" fill="#9f9f9f" />
          <polygon points="66,765 120,755 145,820 120,850 66,850" fill="#e6e6e6" />
          <polygon points="185,560 215,540 205,620 170,620 165,595" fill="#cfcfcf" />
          <polygon points="400,570 450,570 440,620 395,610" fill="#d6d6d6" />
          <polygon points="455,670 540,645 550,655 480,685" fill="#f6f6f6" />
          <polygon points="268,740 295,735 300,755 275,757" fill="#fff" />
          <polygon points="318,712 340,712 335,740 320,742" fill="#fff" />
          <polygon points="700,750 760,730 790,770 740,810 710,800" fill="#f8f8f8" />
          <polygon points="700,810 760,800 858,760 850,800 780,850 690,850" fill="#dadada" />
        </g>
        <rect x="160" y="60" width="700" height="800" filter="url(#grain)" opacity="0.3" />
        <g filter="url(#rough-core)">
          <polygon points="370,360 405,315 435,310 410,350 395,400 405,460 360,520 330,560 320,625 270,630 240,650 225,640 245,560 250,530 300,465" fill="#565656" />
          <polygon points="300,465 330,435 345,470 400,470 330,560 320,610 270,620 240,645 230,630 246,600 250,530" fill="#1c1c1c" />
          <polygon points="280,510 360,500 330,555 300,600 270,560" fill="#000" />
        </g>
        <g filter="url(#soft)">
          {#each dust as s}<circle cx={s.x} cy={s.y} r={s.r} opacity={s.o} />{/each}
        </g>
        <g filter="url(#soft)" fill="none">
          <path d="M312 515L352 462" stroke="#c9c9c9" stroke-width="13" />
          <path d="M440 305Q390 360 400 430L425 470M385 510L330 570L325 630L260 645" stroke="#f0f0f0" stroke-width="9" />
          <path d="M215 560L215 640" stroke="#f2f2f2" stroke-width="16" />
          <path d="M425 472Q480 430 540 465L545 500L580 570L620 630M700 470L745 500L790 580" stroke="#f7f7f7" stroke-width="8" />
          <path d="M505 340L515 310L512 360" stroke="#fff" stroke-width="12" />
          <path d="M380 575Q420 550 480 555M360 560L540 590L620 630L660 710Q635 740 660 755L690 762M620 645L720 620M330 650L430 690M345 720L355 840" stroke="#6d6d6d" stroke-width="4" opacity="0.6" />
          <path d="M660 715L690 730L700 745" stroke="#aaa" stroke-width="5" />
          <path d="M513 508L540 517" stroke="#262626" stroke-width="10" />
          <path d="M672 762L706 758" stroke="#4a4a4a" stroke-width="15" />
          <path d="M240 790L330 810L400 780L470 745M420 780L470 800" stroke="#e2e2e2" stroke-width="5" />
        </g>
      </svg>
      <figcaption>Superposed Images</figcaption>
    </figure>
  </aside>

  <main>
    <h1>Taxi Data Visualization</h1>
    <h2>Comparison of Green and Yellow Taxi</h2>
    <h3>Pickup Locations</h3>
    <div class="columns">
      <section>
        <h5>Green Taxi Pickup Locations</h5>
        {@render taxiMap('g', green, 'Green taxi pickup map')}
      </section>
      <section>
        <h5>Yellow Taxi Pickup Locations</h5>
        {@render taxiMap('y', yellow, 'Yellow taxi pickup map')}
      </section>
    </div>
  </main>
</div>

<style>
  :global(body) {
    margin: 0;
    background: #0e1117;
  }
  .app {
    display: flex;
    min-height: 100vh;
    color: #fafafa;
    background: #0e1117;
    font-family: 'Source Sans Pro', 'Noto Sans CJK SC', 'Noto Sans', sans-serif;
  }
  h1, h2, h3, h5, figure {
    margin: 0;
  }
  h1, h2 {
    font-weight: 500;
  }
  aside h1, h3, h5 {
    font-weight: 700;
  }
  aside {
    box-sizing: border-box;
    flex: 0 0 322px;
    padding: 13px 24px 24px 10px;
    background: #262730;
  }
  aside h1 {
    font-size: 21px;
    line-height: 29px;
  }
  aside h2 {
    margin-top: 24px;
    font-size: 16px;
    line-height: 22px;
  }
  .sliders {
    display: flex;
    flex-direction: column;
    gap: 18px;
    margin-top: 17px;
  }
  .slider {
    display: flex;
    flex-direction: column;
  }
  label {
    font-size: 13px;
    line-height: 22px;
  }
  .value {
    position: relative;
    height: 20px;
    margin: 0 -6px;
    color: #ff4b4b;
  }
  output {
    position: absolute;
    top: 0;
  }
  output, .ticks {
    font: 14px/20px 'Liberation Mono', monospace;
  }
  input {
    appearance: none;
    height: 12px;
    margin: 0 -6px;
    background:
      linear-gradient(to right, #ff4b4b var(--fill), #4a4b56 var(--fill)) center / calc(100% - 12px) 4px no-repeat;
    cursor: pointer;
  }
  input::-webkit-slider-thumb {
    appearance: none;
    width: 12px;
    height: 12px;
    border-radius: 50%;
    background: #ff4b4b;
  }
  .ticks {
    display: flex;
    justify-content: space-between;
    margin-top: 7px;
  }
  figure {
    margin-top: 15px;
  }
  figure svg {
    display: block;
    width: 100%;
  }
  figcaption {
    margin-top: 10px;
    color: #9a9ba1;
    font-size: 13px;
    line-height: 20px;
    text-align: center;
  }
  main {
    flex: 1;
    min-width: 0;
    padding: 27px 80px 48px;
  }
  main h1 {
    font-size: 32px;
    line-height: 40px;
  }
  main h2 {
    margin-top: 27px;
    font-size: 25px;
    line-height: 30px;
  }
  main h3 {
    margin-top: 30px;
    font-size: 21px;
    line-height: 28px;
  }
  .columns {
    display: grid;
    grid-template-columns: 5fr 5fr 3fr;
    gap: 16px;
    margin-top: 20px;
  }
  h5 {
    font-size: 14px;
    line-height: 20px;
  }
  .map {
    position: relative;
    margin-top: 79px;
  }
  .map > svg {
    display: block;
    width: 100%;
  }
  .place {
    fill: #484848;
    stroke: #161616;
    stroke-width: 5px;
    paint-order: stroke;
    font-family: Montserrat, Lato, sans-serif;
    font-weight: 700;
  }
  .info {
    position: absolute;
    right: 10px;
    bottom: 10px;
    width: 24px;
    height: 24px;
    padding: 0;
    border: 0;
    border-radius: 50%;
    background: none;
    cursor: pointer;
  }
  .info svg {
    display: block;
  }
</style>
